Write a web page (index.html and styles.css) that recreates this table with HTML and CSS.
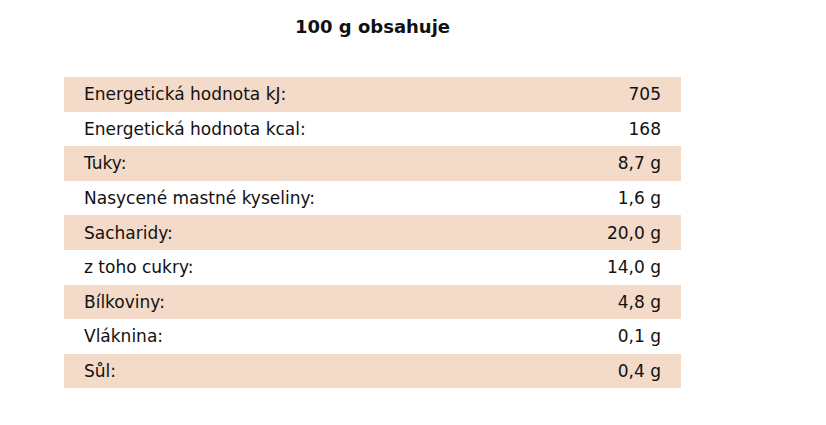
FILE: index.html
```html
<!DOCTYPE html>
<html lang="cs">
<head>
<meta charset="utf-8">
<link rel="stylesheet" href="styles.css">
</head>
<body>
<div class="nutrition">
  <h2 class="title">100 g obsahuje</h2>
  <table class="table">
    <tr class="alt"><td>Energetická hodnota kJ:</td><td class="val">705</td></tr>
    <tr><td>Energetická hodnota kcal:</td><td class="val">168</td></tr>
    <tr class="alt"><td>Tuky:</td><td class="val">8,7 g</td></tr>
    <tr><td>Nasycené mastné kyseliny:</td><td class="val">1,6 g</td></tr>
    <tr class="alt"><td>Sacharidy:</td><td class="val">20,0 g</td></tr>
    <tr><td>z toho cukry:</td><td class="val">14,0 g</td></tr>
    <tr class="alt"><td>Bílkoviny:</td><td class="val">4,8 g</td></tr>
    <tr><td>Vláknina:</td><td class="val">0,1 g</td></tr>
    <tr class="alt"><td>Sůl:</td><td class="val">0,4 g</td></tr>
  </table>
</div>
</body>
</html>
```
FILE: styles.css
```css
html, body {
  margin: 0;
  padding: 0;
  background: #fff;
}
body {
  font-family: "DejaVu Sans", Verdana, sans-serif;
  color: #111;
}
.nutrition {
  width: 617px;
  margin-left: 64px;
  padding-top: 15px;
}
.title {
  margin: 0 0 38px;
  font-size: 18px;
  font-weight: bold;
  text-align: center;
  line-height: 24px;
}
.table {
  width: 100%;
  border-collapse: collapse;
  font-size: 17px;
}
.table td {
  height: 34.6px;
  padding: 0 20px;
  line-height: 20px;
}
.table .val {
  text-align: right;
}
.table .alt td {
  background: #f4dac8;
}
```
